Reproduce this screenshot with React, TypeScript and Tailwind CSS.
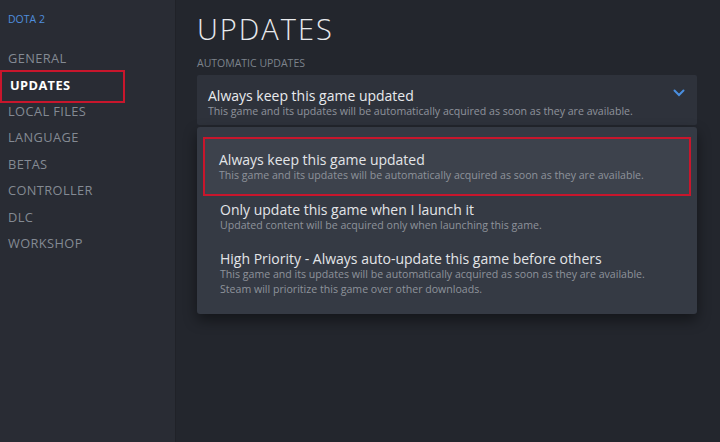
import React from "react";

const font = { fontFamily: '"Open Sans", "Noto Sans", Arial, sans-serif' };

const navItems = ["GENERAL", "UPDATES", "LOCAL FILES", "LANGUAGE", "BETAS", "CONTROLLER", "DLC", "WORKSHOP"];

export default function App() {
  return (
    <div className="w-[720px] h-[442px] flex bg-[#23262d] overflow-hidden" style={font}>
      <div className="w-[176px] h-full bg-[#292c34] border-r border-[#202228] flex flex-col pt-[12px]">
        <div className="pl-[8px] text-[10.5px] text-[#4f8ede] leading-[14px]">DOTA 2</div>
        <div className="mt-[19px] flex flex-col">
          {navItems.map((n) => (
            <div
              key={n}
              className={
                "h-[26.5px] flex items-center pl-[8px] text-[12.8px] tracking-[0.4px] " +
                (n === "UPDATES"
                  ? "text-white font-bold border-2 border-[#c8162c] w-[125px] -mt-[2px] h-[33px] mb-[-4.5px] pl-[6px]"
                  : "text-[#848a93]")
              }
            >
              {n}
            </div>
          ))}
        </div>
      </div>
      <div className="flex-1 flex flex-col pl-[21px] pr-[23px] pt-[10px]">
        <div className="text-[29px] font-light tracking-[2px] text-[#e8eaed] leading-[38px]">UPDATES</div>
        <div className="mt-[8px] text-[10.5px] text-[#7d838c] leading-[14px]">AUTOMATIC UPDATES</div>
        <div className="mt-[5px] bg-[#2e323b] rounded-[2px] h-[50px] flex items-start justify-between pl-[11px] pr-[12px] pt-[12px]">
          <div>
            <div className="text-[14px] leading-[17px] text-[#e8eaed]">Always keep this game updated</div>
            <div className="text-[10.6px] leading-[14px] text-[#8e939b]">
              This game and its updates will be automatically acquired as soon as they are available.
            </div>
          </div>
          <svg width="12" height="8" viewBox="0 0 12 8" className="mt-[2px]">
            <path d="M1.5 1.5 L6 6 L10.5 1.5" stroke="#4a8fe0" strokeWidth="2" fill="none" strokeLinecap="round" />
          </svg>
        </div>
        <div className="mt-[2px] bg-[#353a44] rounded-[3px] shadow-[0_6px_14px_rgba(0,0,0,0.45)] px-[8px] pt-[10px] pb-[17px] flex flex-col">
          <div className="bg-[#3d424c] border-2 border-[#c8162c] py-[12px] px-[14px] -mx-[2px]">
            <div className="text-[14px] leading-[17px] text-[#e3e5e8]">Always keep this game updated</div>
            <div className="text-[10.6px] leading-[14px] text-[#8e939b]">
              This game and its updates will be automatically acquired as soon as they are available.
            </div>
          </div>
          <div className="pt-[5px] px-[15px]">
            <div className="text-[14px] leading-[17px] text-[#e3e5e8]">Only update this game when I launch it</div>
            <div className="text-[10.6px] leading-[14px] text-[#8e939b]">
              Updated content will be acquired only when launching this game.
            </div>
          </div>
          <div className="pt-[18px] px-[15px]">
            <div className="text-[14px] leading-[17px] text-[#e3e5e8]">High Priority - Always auto-update this game before others</div>
            <div className="text-[10.6px] leading-[15px] text-[#8e939b]">
              This game and its updates will be automatically acquired as soon as they are available.
            </div>
            <div className="text-[10.6px] leading-[15px] text-[#8e939b]">
              Steam will prioritize this game over other downloads.
            </div>
          </div>
        </div>
      </div>
    </div>
  );
}
